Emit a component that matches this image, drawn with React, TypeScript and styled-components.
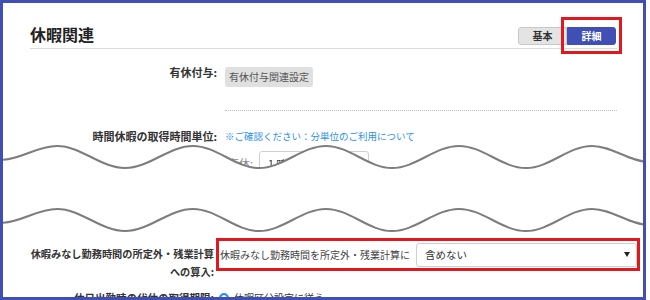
import styled, { createGlobalStyle } from 'styled-components'

const GlobalStyle = createGlobalStyle`
  html, body {
    margin: 0;
    padding: 0;
    background: #fff;
  }
  body {
    font-family: 'Noto Sans CJK JP', 'Noto Sans', sans-serif;
    color: #333;
  }
`

const Frame = styled.div`
  position: relative;
  box-sizing: border-box;
  width: 646px;
  height: 300px;
  border: 3px solid #3f4fb3;
  padding: 20px 26px 0 27px;
  overflow: hidden;
  background: #fff;
`

const Header = styled.div`
  display: flex;
  align-items: flex-end;
  justify-content: space-between;
  padding-bottom: 3px;
  border-bottom: 1px solid #dcdcdc;
`

const Title = styled.h2`
  margin: 0;
  font-size: 16px;
  line-height: 22px;
  font-weight: bold;
  color: #222;
`

const Tabs = styled.div`
  display: flex;
  margin-right: 1px;
`

const Tab = styled.button<{ $active?: boolean; $marked?: boolean }>`
  position: relative;
  box-sizing: border-box;
  width: 49px;
  height: 18px;
  padding: 0;
  font-family: inherit;
  font-size: 10px;
  line-height: 16px;
  font-weight: bold;
  cursor: pointer;
  border: 1px solid ${(p) => (p.$active ? '#3f4fb3' : '#c8c8c8')};
  background: ${(p) => (p.$active ? '#3f4fb3' : '#e4e4e4')};
  color: ${(p) => (p.$active ? '#fff' : '#333')};
  border-radius: ${(p) => (p.$active ? '0 3px 3px 0' : '3px 0 0 3px')};

  ${(p) =>
    p.$marked &&
    `
    &::after {
      content: '';
      position: absolute;
      top: -11px;
      bottom: -10px;
      left: -7px;
      right: -7px;
      border: 3px solid #e0191f;
      pointer-events: none;
    }
  `}
`

const Row = styled.div<{ $cols?: string; $gap?: number; $top: number }>`
  display: grid;
  grid-template-columns: ${(p) => p.$cols ?? '187px 1fr'};
  column-gap: ${(p) => p.$gap ?? 8}px;
  align-items: start;
  margin-top: ${(p) => p.$top}px;
`

const Label = styled.div<{ $lh?: number; $pad?: number; $size?: number }>`
  text-align: right;
  font-size: ${(p) => p.$size ?? 11}px;
  font-weight: bold;
  line-height: ${(p) => p.$lh ?? 18}px;
  padding-top: ${(p) => p.$pad ?? 0}px;
  color: #333;
  white-space: nowrap;
`

const Value = styled.div<{ $divider?: boolean }>`
  min-width: 0;
  ${(p) =>
    p.$divider &&
    `
    padding-bottom: 23px;
    border-bottom: 1px dotted #c4c4c4;
  `}
`

const GrayButton = styled.button`
  height: 20px;
  padding: 0 4px;
  border: none;
  border-radius: 3px;
  background: #e0e0e0;
  color: #555;
  font-family: inherit;
  font-size: 10px;
  line-height: 20px;
`

const Link = styled.a`
  display: block;
  font-size: 9.5px;
  line-height: 16px;
  color: #2b8ff0;
  text-decoration: none;
`

const SubRow = styled.div`
  display: flex;
  align-items: center;
  gap: 6px;
  margin-top: 7px;
  padding-left: 3px;
`

const SubLabel = styled.span`
  font-size: 11px;
  color: #8a8a8a;
`

const Field = styled.div<{ $width?: number }>`
  box-sizing: border-box;
  display: flex;
  align-items: center;
  justify-content: space-between;
  width: ${(p) => (p.$width ? `${p.$width}px` : 'auto')};
  flex: ${(p) => (p.$width ? 'none' : '1')};
  height: 24px;
  padding: 0 6px 0 8px;
  border: 1px solid #cfcfcf;
  border-radius: 3px;
  background: #fff;
  font-size: 10.5px;
  color: #333;
`

const Caret = styled.span`
  width: 0;
  height: 0;
  border-left: 3.5px solid transparent;
  border-right: 3.5px solid transparent;
  border-top: 5px solid #222;
`

const Omitted = styled.div`
  height: 66px;
`

const Marked = styled.div`
  position: relative;
  display: flex;
  align-items: center;
  gap: 6px;
  height: 27px;
  padding-left: 1px;
  font-size: 10px;
  color: #444;
  white-space: nowrap;

  &::after {
    content: '';
    position: absolute;
    inset: -3px;
    border: 3px solid #e0191f;
    pointer-events: none;
  }
`

const Radio = styled.span`
  display: flex;
  align-items: center;
  gap: 5px;
  font-size: 10px;
  line-height: 18px;
  color: #333;

  &::before {
    content: '';
    box-sizing: border-box;
    width: 10px;
    height: 10px;
    border-radius: 50%;
    border: 2px solid #2b8ff0;
    box-shadow: inset 0 0 0 2px #fff;
    background: #2b8ff0;
  }
`

const Tear = styled.svg`
  position: absolute;
  top: 0;
  left: 0;
  pointer-events: none;
`

// points of the torn edge, page coordinates
const wave: [number, number][] = [
  [0, 160],
  [57, 146],
  [125, 168],
  [193, 146],
  [259, 168],
  [326, 146],
  [392, 168],
  [459, 146],
  [526, 168],
  [592, 146],
  [650, 162],
]

const segment = (a: [number, number], b: [number, number], dy: number) => {
  const d = (b[0] - a[0]) * 0.36
  return `C ${a[0] + d} ${a[1] + dy} ${b[0] - d} ${b[1] + dy} ${b[0]} ${b[1] + dy}`
}

const wavePath = (dy: number) => {
  let s = `M ${wave[0][0]} ${wave[0][1] + dy}`
  for (let i = 1; i < wave.length; i++) s += ' ' + segment(wave[i - 1], wave[i], dy)
  return s
}

const bandPath = () => {
  const back = [...wave].reverse()
  let s = wavePath(0)
  s += ` L ${back[0][0]} ${back[0][1] + 63}`
  for (let i = 1; i < back.length; i++) s += ' ' + segment(back[i - 1], back[i], 63)
  return s + ' Z'
}

const App = () => {
  return (
    <>
      <GlobalStyle />
      <Frame>
        <Header>
          <Title>休暇関連</Title>
          <Tabs>
            <Tab>基本</Tab>
            <Tab $active $marked>
              詳細
            </Tab>
          </Tabs>
        </Header>

        <Row $top={13}>
          <Label $lh={20}>有休付与:</Label>
          <Value $divider>
            <GrayButton>有休付与関連設定</GrayButton>
          </Value>
        </Row>

        <Row $top={17}>
          <Label $lh={16}>時間休暇の取得時間単位:</Label>
          <Value>
            <Link href='#'>※ご確認ください：分単位のご利用について</Link>
            <SubRow>
              <SubLabel>有休:</SubLabel>
              <Field $width={110}>
                1 時間
                <Caret />
              </Field>
            </SubRow>
          </Value>
        </Row>

        <Omitted />

        <Row $cols='184px 418px' $gap={5} $top={0}>
          <Label $pad={4} $size={10.2}>
            休暇みなし勤務時間の所定外・残業計算
            <br />
            への算入:
          </Label>
          <Marked>
            休暇みなし勤務時間を所定外・残業計算に
            <Field>
              含めない
              <Caret />
            </Field>
          </Marked>
        </Row>

        <Row $cols='184px 1fr' $gap={5} $top={8}>
          <Label $size={10.5}>休日出勤時の代休の取得期限:</Label>
          <Radio>休暇区分設定に従う</Radio>
        </Row>

        <Tear width={640} height={294} viewBox='3 3 640 294'>
          <path d={bandPath()} fill='#fff' />
          <path d={wavePath(0)} fill='none' stroke='#7d7d7d' strokeWidth={2} />
          <path d={wavePath(63)} fill='none' stroke='#7d7d7d' strokeWidth={2} />
        </Tear>
      </Frame>
    </>
  )
}

export default App
